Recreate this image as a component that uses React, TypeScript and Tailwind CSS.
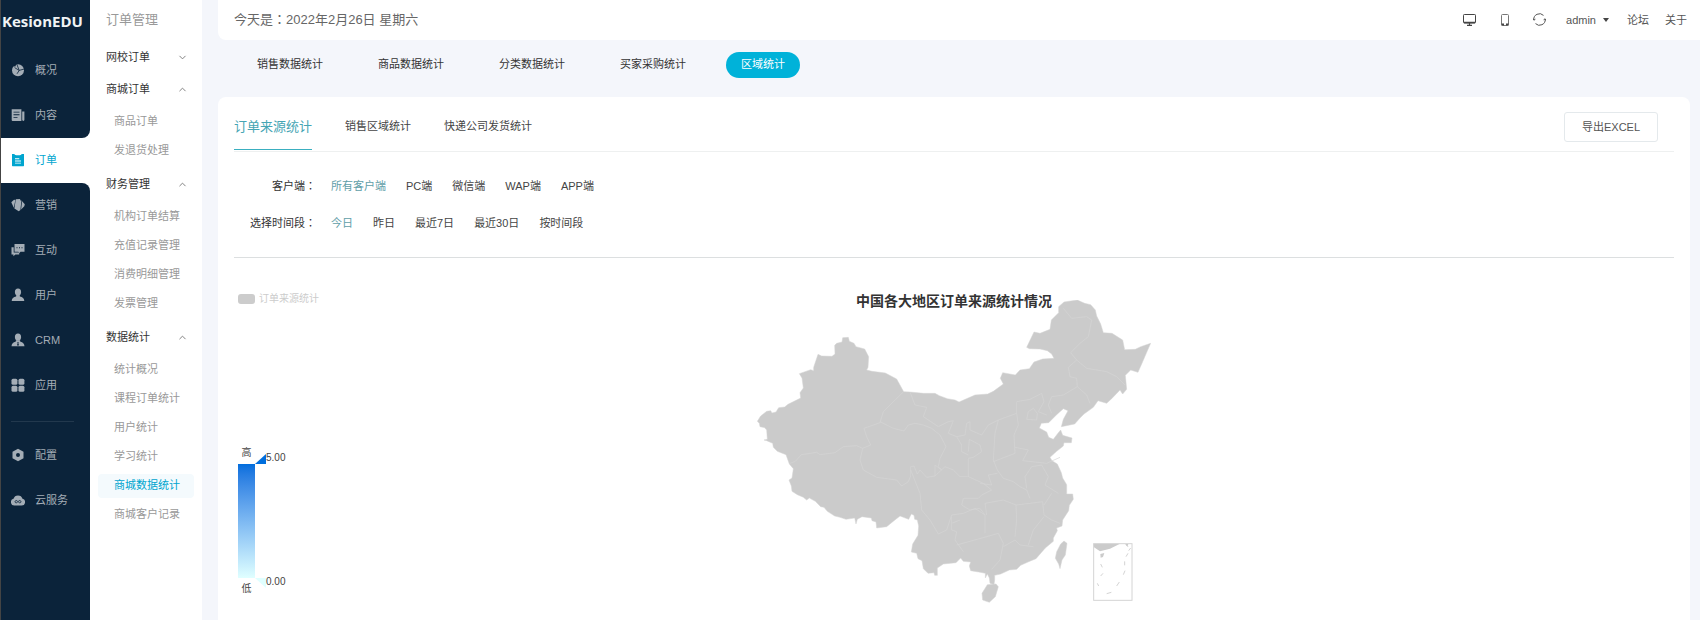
import type { ReactNode } from 'react';
import { ChevronDown, ChevronUp } from 'lucide-react';

interface NavItem {
  label: string;
  icon: ReactNode;
}

interface MenuGroup {
  title: string;
  open: boolean;
  items: string[];
}

// 主导航图标 (14 x 14)
const navTop: NavItem[] = [
  {
    label: '概况',
    icon: (
      <>
        <circle cx="7" cy="7.200" r="6" />
        <path
          d="M5.800 1.200L8.200 7.400 13.200 6M3.600 4.600L8.200 7.400 6 10.800"
          fill="none"
          stroke="#0b233a"
          strokeWidth="0.800"
        />
        <path d="M0 0h5.600L4.400 3.400 1.800 3.200z" fill="#0b233a" />
      </>
    ),
  },
  {
    label: '内容',
    icon: (
      <>
        <path
          fillRule="evenodd"
          d="M.7 1.200h9.700v11.800H1.600a.9.9 0 0 1-.9-.9zM2.500 3.700v.9h6v-.9zm0 2.600v.9h6v-.9zm0 2.600v.9h4v-.9z"
        />
        <path d="M11.200 3.400h2.200v8.400a1.100 1.100 0 0 1-2.200 0z" />
      </>
    ),
  },
];

const navActive: NavItem = {
  label: '订单',
  icon: (
    <path
      fillRule="evenodd"
      d="M1 1h2.300c.3 1 1.100 1.300 3.700 1.300s3.400-.3 3.700-1.300H13v11.600a.6.6 0 0 1-.6.6H1.600a.6.6 0 0 1-.6-.6zM4 5.200v1h4.300v-1zm0 2.300v.9h6v-.9zm0 2.200v.9h6v-.9z"
    />
  ),
};

const navBottom: NavItem[] = [
  {
    label: '营销',
    icon: (
      <>
        <path d="M.3 4.200L3 1.700l1.400.2-1.600 7.900z" />
        <path d="M4.800 1.300l4-.4 1.500 2.500-.9 8.600-1.700 1.200-4.300-2.600z" />
        <path d="M9.600 1.600l4.200 4.600-.5 2.100-3.200 3.300.9-8.200z" />
      </>
    ),
  },
  {
    label: '互动',
    icon: (
      <>
        <path
          fillRule="evenodd"
          d="M3.500.9h10v7.800H9.500L8.500 9.900 7.300 8.700H3.500zM5.500 4.200v1h1v-1zm2.500 0v1h1v-1zm2.500 0v1h1v-1z"
        />
        <path d="M.5 4.300h2.200v5.200h5.500v1.900H4.400l-2 1.900v-1.900H.5z" />
      </>
    ),
  },
  {
    label: '用户',
    icon: (
      <>
        <ellipse cx="7" cy="4.100" rx="3.100" ry="3.700" />
        <path d="M5.400 7h3.200l.3 1.500c2.600.5 4.400 1.700 4.400 4.500H.7c0-2.800 1.800-4 4.400-4.500z" />
      </>
    ),
  },
  {
    label: 'CRM',
    icon: (
      <>
        <ellipse cx="7" cy="4.100" rx="3.100" ry="3.700" />
        <path
          fillRule="evenodd"
          d="M5 7.200h4l.4 1.500c2.500.6 3.900 1.700 4.100 4.600H.5c.2-2.900 1.600-4 4.100-4.600zM6.300 9l.4 1-.6 2.100.9.9.9-.9-.6-2.100.4-1z"
        />
      </>
    ),
  },
  {
    label: '应用',
    icon: (
      <>
        <rect x="0.500" y="0.800" width="5.900" height="5.900" rx="1.500" />
        <rect x="7.500" y="0.800" width="5.900" height="5.900" rx="1.500" />
        <rect x="0.500" y="7.800" width="5.900" height="5.900" rx="1.500" />
        <rect x="7.500" y="7.800" width="5.900" height="5.900" rx="1.500" />
      </>
    ),
  },
];

const navSystem: NavItem[] = [
  {
    label: '配置',
    icon: (
      <path
        fillRule="evenodd"
        d="M7 .8l5.500 2.900v6.600L7 13.300l-5.500-3V3.700zM7 5.100a2 2 0 1 0 0 4 2 2 0 0 0 0-4z"
      />
    ),
  },
  {
    label: '云服务',
    icon: (
      <>
        <path d="M3.400 12.500A3.400 3.400 0 0 1 2.500 5.800 4.700 4.700 0 0 1 11.500 5.800a3.400 3.400 0 0 1-.9 6.700z" />
        <path
          d="M7 8.600c-.8-1.500-3-1.300-3 .1s2 1.600 3-.1c.8-1.500 3-1.300 3 .1s-2 1.600-3-.1z"
          fill="none"
          stroke="#0b233a"
          strokeWidth="0.800"
        />
      </>
    ),
  },
];

const menuGroups: MenuGroup[] = [
  { title: '网校订单', open: false, items: [] },
  { title: '商城订单', open: true, items: ['商品订单', '发退货处理'] },
  {
    title: '财务管理',
    open: true,
    items: ['机构订单结算', '充值记录管理', '消费明细管理', '发票管理'],
  },
  {
    title: '数据统计',
    open: true,
    items: ['统计概况', '课程订单统计', '用户统计', '学习统计', '商城数据统计', '商城客户记录'],
  },
];

const pageTabs = ['销售数据统计', '商品数据统计', '分类数据统计', '买家采购统计', '区域统计'];
const clients = ['所有客户端', 'PC端', '微信端', 'WAP端', 'APP端'];
const periods = ['今日', '昨日', '最近7日', '最近30日', '按时间段'];

// 全国轮廓
const mainland =
  'M52 424L62 408 80 394 92 392 96 399 108 396 116 383 134 381 144 373 182 354 180 338 190 324 186 294 178 281 212 269 221 272 221 262 234 223 245 228 276 229 285 222 284 196 290 190 306 186 308 173 325 172 328 184 342 190 348 200 374 207 386 230 384 262 380 270 396 274 436 279 470 297 491 335 510 336 550 340 585 340 598 347 622 356 645 360 657 366 705 345 743 342 760 334 790 312 781 295 788 278 826 285 840 270 868 266 882 246 908 237 942 235 935 222 922 212 900 207 868 206 860 202 882 156 900 160 930 148 934 120 956 98 956 80 972 66 1012 60 1034 70 1052 74 1066 90 1070 108 1082 132 1090 158 1116 160 1148 180 1154 209 1186 208 1202 200 1232 190 1224 208 1208 245 1194 277 1172 270 1156 286 1160 328 1148 342 1140 330 1115 356 1100 370 1074 362 1060 382 1032 402 1020 414 1004 432 964 440 970 418 984 392 970 386 950 404 926 428 904 430 898 444 920 456 926 472 940 478 952 462 962 450 968 466 996 474 994 488 972 488 970 498 950 514 930 532 936 542 952 552 964 578 968 594 980 614 980 642 998 642 1000 658 988 676 986 692 968 720 966 738 950 744 952 752 940 774 940 784 916 804 888 836 864 846 842 856 830 868 808 870 782 882 764 886 764 900 762 914 750 910 748 894 742 882 736 894 736 880 716 876 692 872 688 858 692 846 670 844 662 834 648 848 610 852 592 864 592 886 584 886 582 878 564 880 550 866 546 842 534 836 530 820 514 816 518 792 534 766 536 738 532 720 524 718 522 706 514 702 506 718 480 708 462 722 440 740 410 744 408 726 396 722 394 714 366 710 352 718 348 732 344 714 318 718 300 712 284 708 262 694 252 682 242 680 226 664 208 654 200 660 190 652 172 644 156 634 154 618 147 600 156 594 160 566 148 552 138 524 112 514 100 502 98 490 80 482 72 480 82 478 80 450 74 443 60 440 58 430z';

function NavIcon({ children }: { children: ReactNode }) {
  return (
    <svg viewBox="0 0 14 14" className="size-[14px] fill-current" aria-hidden="true">
      {children}
    </svg>
  );
}

function NavLink({ item, active = false }: { item: NavItem; active?: boolean }) {
  return (
    <a
      href="#"
      className={`flex h-[45px] items-center gap-[10px] pb-[2px] pl-[10px] ${
        active ? 'text-[#00a5cf]' : 'text-[#a4adb6]'
      }`}
    >
      <NavIcon>{item.icon}</NavIcon>
      {item.label}
    </a>
  );
}

function Sidebar() {
  return (
    <nav className="flex w-[90px] shrink-0 flex-col border-l border-[#444] bg-white">
      <div className="rounded-br-lg bg-[#0b233a]">
        <div className="flex h-12 items-center pb-[6px] pl-px font-['Open_Sans','Noto_Sans',sans-serif] text-[15px] leading-5 font-bold text-[#f1f3f5]">
          KesionEDU
        </div>
        {navTop.map((item) => (
          <NavLink key={item.label} item={item} />
        ))}
      </div>
      <NavLink item={navActive} active />
      <div className="flex-1 rounded-tr-lg bg-[#0b233a]">
        {navBottom.map((item) => (
          <NavLink key={item.label} item={item} />
        ))}
        <hr className="mt-[13px] mr-4 mb-[11px] ml-[10px] border-[#22384d]" />
        {navSystem.map((item) => (
          <NavLink key={item.label} item={item} />
        ))}
      </div>
    </nav>
  );
}

function SubMenu() {
  return (
    <aside className="w-28 shrink-0 bg-white">
      <h2 className="h-[41px] pl-4 text-[13px] leading-[39px] text-[#999]">订单管理</h2>
      {menuGroups.map((group) => (
        <section key={group.title}>
          <button
            type="button"
            aria-expanded={group.open}
            className="flex h-8 w-full items-center justify-between pr-[14px] pl-4 text-[#333]"
          >
            {group.title}
            {group.open ? (
              <ChevronUp size={11} className="text-[#777]" />
            ) : (
              <ChevronDown size={11} className="text-[#777]" />
            )}
          </button>
          {group.open && (
            <ul className="pt-[2px] pb-[3px]">
              {group.items.map((name) => (
                <li key={name} className="flex h-[29px] items-center px-2">
                  <a
                    href="#"
                    className={`h-6 w-full rounded pl-4 leading-[22px] ${
                      name === '商城数据统计' ? 'bg-[#f4fafd] text-[#00a5cf]' : 'text-[#999]'
                    }`}
                  >
                    {name}
                  </a>
                </li>
              ))}
            </ul>
          )}
        </section>
      ))}
    </aside>
  );
}

function TopBar() {
  return (
    <header className="flex h-10 items-center justify-between rounded-bl-lg bg-white pr-[13px] pb-px pl-4 text-[#555]">
      <p className="font-['Liberation_Sans','Noto_Sans_CJK_TC',sans-serif] text-[13px] text-[#666]">
        今天是：2022年2月26日 星期六
      </p>
      <div className="flex items-center">
        <button type="button" aria-label="电脑端" className="mr-[25px]">
          <svg viewBox="0 0 13 12" className="h-3 w-[13px]" fill="none" stroke="#444">
            <rect x="0.500" y="0.500" width="12" height="8.500" rx="0.800" />
            <path d="M1 8.500h11" strokeWidth="1.500" />
            <path d="M6.500 9v2M4 11.400h5" strokeWidth="1.200" />
          </svg>
        </button>
        <button type="button" aria-label="手机端" className="mr-[24px]">
          <svg viewBox="0 0 8 12" className="h-3 w-2" fill="none" stroke="#777">
            <rect x="0.500" y="0.500" width="7" height="11" rx="1" />
            <path d="M.5 10.500h2.500M5 10.500h2.500" strokeWidth="2" stroke="#444" />
          </svg>
        </button>
        <button type="button" aria-label="刷新" className="mr-5">
          <svg viewBox="0 0 13 13" className="size-[13px]" fill="none" stroke="#555">
            <path d="M.8 7A5.700 5.700 0 0 1 10.500 2.400M12.200 6A5.700 5.700 0 0 1 2.500 10.600" />
            <path d="M.2 5.500l.7 1.700 1.500-1M12.800 7.500l-.7-1.700-1.500 1" />
          </svg>
        </button>
        <button type="button" className="mr-[18px] flex items-center gap-[7px]">
          admin
          <svg viewBox="0 0 6 4" className="h-1 w-[6px] fill-[#444]">
            <path d="M0 0h6L3 4z" />
          </svg>
        </button>
        <a href="#" className="mr-4">
          论坛
        </a>
        <a href="#">关于</a>
      </div>
    </header>
  );
}

function FilterRow({ label, options }: { label: string; options: string[] }) {
  return (
    <div className="flex h-[37px] items-center">
      <span className="w-[82px] text-right font-['Liberation_Sans','Noto_Sans_CJK_TC',sans-serif] text-[#333]">
        {label}
      </span>
      <div className="ml-[15px] flex gap-5">
        {options.map((name, i) => (
          <button key={name} type="button" className={i === 0 ? 'text-[#5f9ea8]' : 'text-[#444]'}>
            {name}
          </button>
        ))}
      </div>
    </div>
  );
}

function ChinaMap() {
  return (
    <svg viewBox="51 60 1182 909" className="h-[303px] w-[394px]" role="img" aria-label="中国地图">
      <g fill="#cbcbcb" stroke="#d4d4d4" strokeWidth="1.500" strokeLinejoin="round">
        <path d={mainland} />
        <path d="M742 914l26-2 7 8-9 30-18 17-20-7-2-20z" />
        <path d="M972 783l9 7-5 35-10 15-6 26-4-14-10-17 4-20 12-23z" />
      </g>

      {/* 省界 */}
      <g fill="none" stroke="#d4d4d4" strokeWidth="2" strokeLinejoin="round">
        <path d="M150 550L166 544 184 524 230 517 240 524 285 518 310 500 350 497 368 505 392 495 380 470 372 445 420 428 430 395 455 370 491 335" />
        <g transform="translate(360 270)">
          <path d="M60 155L100 175 132 183 145 165 165 160 190 165 215 175 240 195 258 230 240 265 235 290 245 300 225 285 225 318 200 322 180 300 172 312 162 288 152 290 152 318 145 335 125 348 110 330 50 322 10 300 0 270 8 235" />
          <path d="M150 66L165 105 200 112 190 140 235 170 265 155 280 152 265 190 290 200 305 225 305 245 325 255" />
          <path d="M290 200L315 195 320 160 330 155 330 180 365 195 385 165 415 150 405 190 400 270 412 300 430 325 460 335 480 350 500 360 510 385" />
          <path d="M325 245L328 208 360 225 365 245 340 262 325 265 325 320" />
          <path d="M225 318L255 290 280 300 300 320 325 320 370 340 395 360 365 375 355 385 310 385 305 405 330 420 360 415 375 435" />
          <path d="M412 310L385 315 395 345 360 340" />
          <path d="M415 150L470 130 475 165 462 195 465 250 400 275" />
          <path d="M470 130L470 95 510 88 545 70 552 95 535 125 560 135" />
          <path d="M500 148L505 125 520 115 532 130 530 150z" />
          <path d="M465 232L505 240 488 272 560 280 600 262" />
          <path d="M545 285L515 290 495 320 500 355M545 285L565 320 555 345 595 370" />
          <path d="M380 435L375 400 430 390 468 405 470 450 465 500M468 405L510 400 548 395 552 435 575 450 600 460M575 370L552 405M552 440L520 480 505 525" />
          <path d="M152 300L180 370 185 420 210 450 235 492 260 480 275 435 310 430 345 415 375 435 375 490" />
          <path d="M275 440L275 460 300 450M275 460L275 480 290 485 285 510 310 545M290 525L380 500 415 490 430 520 420 570 395 598M430 530L465 510 480 525 520 530" />
        </g>
        <g transform="translate(600)">
          <path d="M392 218L420 190 445 170 455 120 440 110 395 115 370 85M392 218L410 240 385 262 390 290 410 295 412 320 440 345 450 370" />
          <path d="M410 240L440 265 500 275 530 290 555 315M412 320L370 345 335 350 325 375 335 400" />
        </g>
      </g>

      {/* 南海诸岛 */}
      <g transform="translate(480 480)">
        <path d="M580 311H660L630 326 600 334 582 322z" fill="#cbcbcb" />
        <rect x="581" y="311" width="115" height="170" fill="none" stroke="#d4d4d4" strokeWidth="3" />
        <path
          d="M602 372l5 10M609 400l-7 8M592 430l4 8M620 461l14-4M650 438l8-12M670 404l5-12M674 376v-12M678 350l6-10M686 332l6-8M678 314l6 6"
          fill="none"
          stroke="#d4d4d4"
          strokeWidth="3"
        />
        <path d="M601 342l12-3-4 12-7 2zM676 312h9l-3 8z" fill="#cbcbcb" />
      </g>
    </svg>
  );
}

function VisualMap() {
  return (
    <div className="flex w-[17px] flex-col items-center gap-[5px] text-[10px] leading-3 text-[#444]">
      <span>高</span>
      <div className="relative h-[114px] w-full bg-linear-to-b from-[#006edd] to-[#e0ffff]">
        <svg viewBox="0 0 11 10" className="absolute -top-[10px] left-full h-[10px] w-[11px] fill-[#006edd]">
          <path d="M0 10L11 0v10z" />
        </svg>
        <span className="absolute -top-3 left-[28px]">5.00</span>
        <svg viewBox="0 0 11 10" className="absolute top-full left-full h-[10px] w-[11px] fill-[#e0ffff]">
          <path d="M0 0h11v10z" />
        </svg>
        <span className="absolute top-[112px] left-[28px]">0.00</span>
      </div>
      <span>低</span>
    </div>
  );
}

export default function App() {
  return (
    <div className="flex min-h-screen bg-[#f4f6fb] font-['Liberation_Sans','Noto_Sans_CJK_SC',sans-serif] text-[11px] leading-4">
      <Sidebar />
      <SubMenu />

      <main className="flex min-w-0 flex-1 flex-col pl-4">
        <TopBar />

        {/* 统计页签 */}
        <div className="flex gap-[25px] px-6 pt-3 pb-[19px]">
          {pageTabs.map((name) => (
            <a
              key={name}
              href="#"
              className={`h-[26px] rounded-full px-[15px] leading-[25px] ${
                name === '区域统计' ? 'bg-[#00b2d9] text-white' : 'text-[#333]'
              }`}
            >
              {name}
            </a>
          ))}
        </div>

        <section className="mr-[10px] flex-1 rounded-t-lg bg-white px-4">
          <div className="flex items-center justify-between border-b border-[#eef0f0] pt-[7px] pb-px">
            <div className="flex gap-[33px]">
              <a href="#" className="h-[46px] border-b border-[#3aafc0] text-[13px] leading-[45px] text-[#45a5b4]">
                订单来源统计
              </a>
              <a href="#" className="leading-[45px] text-[#444]">
                销售区域统计
              </a>
              <a href="#" className="leading-[45px] text-[#444]">
                快递公司发货统计
              </a>
            </div>
            <button
              type="button"
              className="mr-4 h-[30px] w-[94px] rounded-[3px] border border-[#e4e9ec] text-[#555]"
            >
              导出EXCEL
            </button>
          </div>

          <div className="border-b border-[#dcdfe0] pt-[15px] pb-4">
            <FilterRow label="客户端：" options={clients} />
            <FilterRow label="选择时间段：" options={periods} />
          </div>

          {/* 地图 */}
          <div className="relative grid grid-cols-[1fr_auto_1fr] pt-[34px] pb-[18px]">
            <div className="flex flex-col justify-between pb-2 pl-1">
              <div className="flex items-center gap-1 text-[10px] leading-[14px] text-[#ccc]">
                <span className="h-[10px] w-[17px] rounded-[3px] bg-[#ccc]" />
                订单来源统计
              </div>
              <VisualMap />
            </div>
            <div className="pt-2">
              <ChinaMap />
            </div>
            <h3 className="absolute inset-x-0 top-[34px] text-center text-[14px] leading-[18px] font-bold text-[#333]">
              中国各大地区订单来源统计情况
            </h3>
          </div>
        </section>
      </main>
    </div>
  );
}
